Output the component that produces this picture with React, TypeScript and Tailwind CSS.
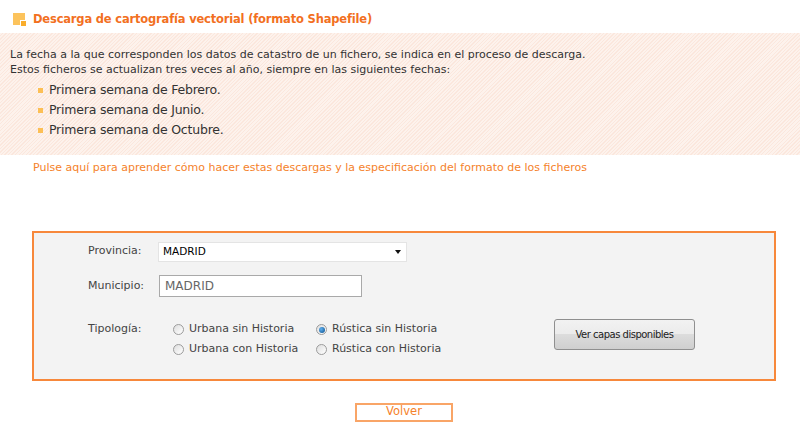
import React from 'react';

const font = { fontFamily: '"DejaVu Sans", Verdana, sans-serif' };

function Radio({ label, checked }: { label: string; checked?: boolean }) {
  return (
    <label className="flex items-center gap-[5px] h-[20px] text-[11px] text-[#444]">
      <span className="w-[11px] h-[11px] rounded-full border border-[#9c9c9c] bg-[linear-gradient(135deg,#dedede,#ffffff)] flex items-center justify-center">
        {checked && <span className="w-[6px] h-[6px] rounded-full bg-[radial-gradient(circle_at_35%_35%,#5fb0f0,#0c4f8a)]" />}
      </span>
      {label}
    </label>
  );
}

export default function App() {
  const fechas = ['Primera semana de Febrero.', 'Primera semana de Junio.', 'Primera semana de Octubre.'];

  return (
    <div className="w-[800px] h-[437px] bg-white" style={font}>
      {/* header */}
      <div className="h-[33px] flex items-center pl-[13px] pt-[6px]">
        <span className="relative w-[14px] h-[14px] mr-[6px]">
          <span className="absolute left-0 top-0 w-[12px] h-[12px] bg-[#fcc35c]" />
          <span className="absolute left-[7px] top-[7px] w-[7px] h-[7px] bg-[#f9ad2c] border border-white" />
        </span>
        <h1 className="text-[11.5px] tracking-[-0.18px] font-bold text-[#f2701f]">Descarga de cartografía vectorial (formato Shapefile)</h1>
      </div>

      {/* info panel */}
      <div className="bg-[repeating-linear-gradient(135deg,#fdf2ec_0px,#fdf2ec_1.5px,#fbe7dd_1.5px,#fbe7dd_2.5px)] pl-[10px] pt-[14px] pb-[15px] text-[11px] leading-[15px] text-[#333]">
        <p>La fecha a la que corresponden los datos de catastro de un fichero, se indica en el proceso de descarga.</p>
        <p>Estos ficheros se actualizan tres veces al año, siempre en las siguientes fechas:</p>
        <ul className="mt-[2.5px] pl-[28px]">
          {fechas.map((f) => (
            <li key={f} className="flex items-center gap-[6px] h-[20px] text-[12.5px] tracking-[-0.2px] text-[#333]">
              <span className="w-[5px] h-[5px] bg-[#fcbf55] mt-[2px]" />
              {f}
            </li>
          ))}
        </ul>
      </div>

      <a className="block mt-[5px] ml-[33px] text-[11px] leading-[16px] text-[#f5822b] cursor-pointer">
        Pulse aquí para aprender cómo hacer estas descargas y la especificación del formato de los ficheros
      </a>

      {/* form */}
      <div className="mt-[55px] ml-[32px] w-[744px] h-[150px] border-2 border-[#f7883b] bg-[#f3f3f3] pl-[54px] pt-[9px]">
        <div className="flex items-center h-[20px]">
          <span className="w-[70px] text-[11px] text-[#444]">Provincia:</span>
          <div className="w-[249px] h-[20px] bg-white border border-[#e4e4e4] flex items-center justify-between pl-[4px] pr-[5px]">
            <span className="text-[10.5px] text-[#000]">MADRID</span>
            <span className="w-0 h-0 border-l-[3.5px] border-r-[3.5px] border-t-[4px] border-l-transparent border-r-transparent border-t-[#111]" />
          </div>
        </div>

        <div className="flex items-center h-[22px] mt-[13px]">
          <span className="w-[71px] text-[11px] text-[#444] mt-[2px]">Municipio:</span>
          <div className="w-[203px] h-[22px] bg-white border border-[#a9a9a9] flex items-center pl-[5px]">
            <span className="text-[12px] text-[#666]">MADRID</span>
          </div>
        </div>

        <div className="flex items-start mt-[23px]">
          <span className="w-[85px] h-[20px] flex items-center text-[11px] text-[#444]">Tipología:</span>
          <div className="grid grid-cols-[143px_238px]">
            <Radio label="Urbana sin Historia" />
            <Radio label="Rústica sin Historia" checked />
            <Radio label="Urbana con Historia" />
            <Radio label="Rústica con Historia" />
          </div>
          <button className="mt-[-1px] w-[141px] h-[31px] rounded-[3px] border border-[#8f8f8f] bg-[linear-gradient(#f2f2f2,#ebebeb_50%,#dcdcdc_50%,#cfcfcf)] text-[10px] tracking-[-0.5px] text-[#222]">
            Ver capas disponibles
          </button>
        </div>
      </div>

      <div className="ml-[32px] w-[744px] flex justify-center mt-[22px]">
        <button className="w-[98px] h-[19px] border-2 border-[#f9a567] bg-white text-[11.5px] text-[#f5822b] leading-none">
          Volver
        </button>
      </div>
    </div>
  );
}
